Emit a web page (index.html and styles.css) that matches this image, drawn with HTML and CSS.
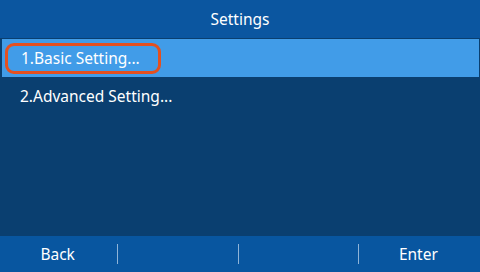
FILE: index.html
```html
<!DOCTYPE html>
<html lang="en">
<head>
    <meta charset="UTF-8">
    <title>Settings</title>
    <link rel="stylesheet" href="styles.css">
</head>
<body>
    <div class="screen">
        <div class="title">Settings</div>

        <ul class="menu">
            <li class="item selected"><span class="focus">1.Basic Setting...</span></li>
            <li class="item">2.Advanced Setting...</li>
        </ul>

        <div class="softkeys">
            <div class="key">Back</div>
            <div class="key"></div>
            <div class="key"></div>
            <div class="key">Enter</div>
        </div>
    </div>
</body>
</html>
```

FILE: styles.css
```css
* {
  box-sizing: border-box;
}

body {
  margin: 0;
  font-family: "Noto Sans", "Open Sans", sans-serif;
  color: #fff;
}

.screen {
  width: 480px;
  height: 272px;
  display: flex;
  flex-direction: column;
  background: #0a3f70;
  overflow: hidden;
}

.title {
  height: 38px;
  padding-top: 8px;
  background: #0b56a0;
  text-align: center;
  font-size: 15.5px;
  line-height: 22px;
}

.menu {
  flex: 1;
  list-style: none;
  margin: 0;
  padding: 1px 1px 0 2px;
}

.item {
  height: 38px;
  padding-left: 18px;
  display: flex;
  align-items: center;
  font-size: 15.5px;
}

.item.selected {
  background: #419ce8;
  padding-left: 3px;
}

.focus {
  width: 156px;
  height: 31px;
  padding-left: 13px;
  display: flex;
  align-items: center;
  border: 3px solid #e4501f;
  border-radius: 9px;
}

/* softkey bar, dividers sit at 118 / 238 / 358 */
.softkeys {
  width: 482px;
  height: 36px;
  margin-left: -2px;
  padding-right: 2px;
  background: #0856a0;
  display: flex;
  align-items: center;
}

.key {
  flex: 1;
  height: 20px;
  text-align: center;
  font-size: 15.5px;
  line-height: 20px;
  border-left: 1px solid #8fb4d8;
}

.key:first-child {
  border-left: 0;
}
```
